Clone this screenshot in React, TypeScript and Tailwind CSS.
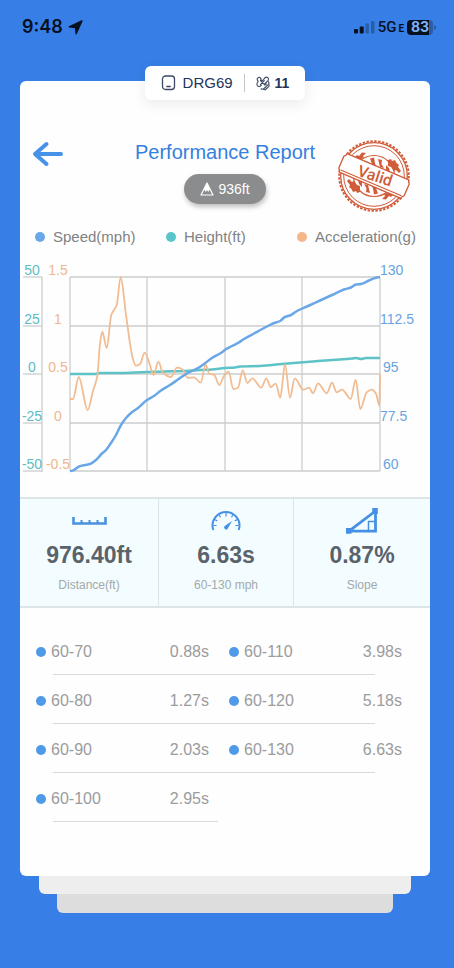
import type { ReactNode } from "react";

type Point = [number, number];

const GRID_X = [50, 127, 205, 282, 360];
const GRID_Y = [15, 64, 112, 161, 209];

const HEIGHT_LABELS = ["50", "25", "0", "-25", "-50"];
const ACCEL_LABELS = ["1.5", "1", "0.5", "0", "-0.5"];
const SPEED_LABELS = ["130", "112.5", "95", "77.5", "60"];

const speedLine: Point[] = [
  [50, 209], [54, 208], [59, 204.5], [65, 203], [70, 202], [76, 198], [81, 192.5], [86, 188],
  [91, 181], [96, 173], [101, 163], [106, 156], [111, 151], [118, 146], [127, 138], [134, 134],
  [141, 128.5], [150, 123], [158, 117.5], [166, 112], [172, 109], [178, 106], [184, 102],
  [192, 96], [200, 91.5], [207, 86.5], [212, 84], [218, 81], [224, 77], [234, 71.5], [247, 64.5],
  [253, 61.5], [260, 59], [265, 55], [271, 53], [277, 49], [288, 44], [300, 38.5], [312, 33],
  [324, 27.5], [331, 25.5], [336, 22.5], [341, 22], [349, 18.5], [355, 16], [360, 15],
];

const heightLine: Point[] = [
  [50, 112], [75, 112], [80, 111], [100, 111], [115, 110.5], [128, 110], [145, 109.5],
  [165, 109], [180, 108], [192, 107.5], [205, 106], [215, 105.5], [220, 104.5], [240, 104],
  [262, 102], [280, 100.5], [293, 99.5], [305, 98.5], [320, 97.5], [332, 96.5], [336, 96],
  [341, 97], [346, 96], [360, 96],
];

const accelLine: Point[] = [
  [50, 137], [53, 137], [58.7, 115], [67.7, 148], [73, 129], [77.3, 114], [80, 82], [82.3, 69.7],
  [86.7, 86], [91.3, 53], [96.7, 43], [100.7, 15], [106, 53], [112.7, 96], [116, 103.7],
  [120, 102], [124.7, 90.7], [129.3, 101], [133.7, 113], [138.3, 99.7], [143, 111], [151, 115],
  [157, 105.7], [162, 107], [168, 116], [174, 115.3], [180.7, 120.7], [185.7, 102.7],
  [189.3, 112], [194, 112.6], [199.3, 123], [204, 114], [208.7, 109.7], [213.3, 127],
  [218, 125.7], [222.7, 108.3], [227.3, 121], [232.3, 116.3], [241.3, 125.7], [246.3, 116.3],
  [250.7, 125], [255.7, 121.7], [260.3, 135.7], [265, 102.3], [270, 135.7], [274.7, 116.3],
  [283.3, 127.7], [289, 125.7], [293, 131.3], [298, 121.3], [306.7, 131.3], [312, 120.7],
  [316.7, 130.3], [322, 127.7], [330.7, 137], [335.7, 117.7], [340.3, 147], [346.7, 130.3],
  [352, 127.7], [356, 131.7], [359.5, 143.7], [360, 111],
];

// Cubic path whose tangent is flat at every local peak or dip.
function smoothPath(points: Point[]) {
  const slopes = points.map(([x, y], i) => {
    const prev = points[i - 1];
    const next = points[i + 1];
    if (!prev || !next || (y - prev[1]) * (next[1] - y) <= 0) return 0;
    const a = (y - prev[1]) / (x - prev[0]);
    const b = (next[1] - y) / (next[0] - x);
    return (2 * a * b) / (a + b);
  });
  return points.reduce((path, [x, y], i) => {
    if (i === 0) return `M${x} ${y}`;
    const [px, py] = points[i - 1];
    const h = (x - px) / 3;
    return `${path}C${px + h} ${py + h * slopes[i - 1]} ${x - h} ${y - h * slopes[i]} ${x} ${y}`;
  }, "");
}

function StatusBar() {
  return (
    <div className="flex h-[66px] items-start justify-between pt-[17px] pl-[22px] pr-[18px] text-[#06101f]">
      <div className="flex h-5 items-center gap-[5px]">
        <span className="font-[Inter,sans-serif] text-lg font-semibold leading-5">9:48</span>
        <svg width="15" height="15" viewBox="0 0 15 15" fill="currentColor" stroke="currentColor" strokeWidth="1.400" strokeLinejoin="round">
          <path d="M13.900 1 1.200 6.800l6.300.7.700 6.300z" />
        </svg>
      </div>
      <div className="flex h-5 items-center">
        <svg className="mr-[3px]" width="21" height="14" viewBox="0 0 21 14" fill="currentColor">
          <rect x="0" y="9" width="4" height="4.500" rx="1" />
          <rect x="5.700" y="6.500" width="4" height="7" rx="1" />
          <rect x="11.400" y="3.500" width="3.500" height="10" rx="1" opacity=".3" />
          <rect x="17" y="1" width="3.500" height="12.500" rx="1" opacity=".3" />
        </svg>
        <span className="font-[Roboto,sans-serif] text-[15px] font-medium leading-5">5G</span>
        <span className="ml-[2px] mt-1 font-[Roboto,sans-serif] text-[10px] font-bold leading-4">E</span>
        <span className="ml-[3px] flex h-[15px] w-[26px] items-center justify-center rounded-[4px] bg-linear-to-r from-[#06101f] from-85% to-[#2a5ba6] to-85% font-[Inter,sans-serif] text-sm font-bold leading-4 text-[#80b2f8]">
          83
        </span>
        <span className="ml-px h-[5px] w-[2px] rounded-r-sm bg-[#2a5ba6]" />
      </div>
    </div>
  );
}

function DeviceTab() {
  return (
    <div className="relative z-10 mx-auto flex h-[34px] items-center rounded-md bg-white px-4 text-[#24345c] shadow-[0_4px_14px_rgba(0,0,0,0.08)]">
      <svg className="mr-[7px]" width="15" height="16" viewBox="0 0 15 16" fill="none" stroke="#3d4965" strokeWidth="1.300">
        <rect x="1.500" y="1" width="12" height="13.500" rx="3" />
        <path d="M5.800 11.500h3.400" strokeLinecap="round" />
      </svg>
      <span className="text-[15px] leading-5">DRG69</span>
      <span className="mx-[11px] h-[18px] w-px bg-[#c3c5ca]" />
      <svg className="mr-[5px]" width="14" height="15" viewBox="0 0 14 15" fill="none" stroke="#3d4965" strokeWidth="1.100" strokeLinecap="round" strokeLinejoin="round">
        <path d="M4.500 4.500 8.600 8.600M8.300 4.700 4.300 8.700" />
        <path d="M5 3.900C5 1.900 3.700 1 2.500 1.400 1.100 1.900.7 3.500 1.700 4.500c.5.500.6 1.100.1 1.700-1.300 1.300-1.100 3.300.3 4 1.500.8 2.500-.2 3.400-1.100" />
        <path d="M5 4c1 .8 1.700.6 2.400-.2C8.300 2.600 8.800 1 10.500 1.100c1.600.1 2.600 1.900 1.700 3.200L8.600 8" />
        <path d="M12.400 5.600c.9 1 .6 2.200-.2 3L8 12.500c-.8.8-2 .9-2.900.3" />
        <path d="M13 8.800c.3.800 0 1.400-.6 2l-2.300 2.200c-.6.600-1.300.8-2.100.7M9 9.200l1.500-1.400" />
      </svg>
      <span className="text-sm font-bold leading-5">11</span>
    </div>
  );
}

function ValidStamp() {
  return (
    <svg className="mr-1.5" width="76" height="76" viewBox="0 0 76 76" role="img" aria-label="Valid">
      <g fill="none" stroke="#d05c39">
        <circle cx="38" cy="38" r="34.800" strokeWidth="2" strokeDasharray="2.400 1.504" />
        <circle cx="38" cy="38" r="33.300" strokeWidth="1.300" />
        <circle cx="38" cy="38" r="30.300" strokeWidth="1" />
        <circle cx="38" cy="38" r="20.500" strokeWidth="1.200" />
      </g>
      <g fill="#d05c39">
        <path d="M17 21l4-4 2 1 3-3.500 4 .5-3 3 1 2-3 1-1 3zM52 22l3-1 1 2 3-1 1.500 3 2.500 2-1 2 3 4-2 2-3-3-2 1-3-4-3-1z" />
        <path d="M59 55l-4 4-2-1-3 3.500-4-.5 3-3-1-2 3-1 1-3zM24 54l-3 1-1-2-3 1-1.500-3-2.500-2 1-2-3-4 2-2 3 3 2-1 3 4 3 1z" />
        <path d="M25 26l3-3 4 1 .5 3-2 2zM34 20.500l4-1 1 6 1.500 3-4-1zM42 21l4 1-.5 4 2.500 4-4-1zM50 27l3 3 1 4-4-2z" />
        <path d="M51 50l-3 3-4-1-.5-3 2-2zM42 55.500l-4 1-1-6-1.500-3 4 1zM34 55l-4-1 .5-4-2.500-4 4 1zM26 49l-3-3-1-4 4 2z" />
      </g>
      <g transform="rotate(23 38 38)">
        <path
          d="M4.500 28h67q.2 2.500 2 3.500v13q-2 .8-2 3.500h-67q-.2-2.500-2-3.500v-13q2-.8 2-3.500z"
          fill="#fff"
          stroke="#d05c39"
          strokeWidth="1.300"
          strokeLinejoin="round"
        />
        <path d="M5 45.500h66" stroke="#d05c39" strokeWidth="1.100" />
      </g>
      <text
        x="39"
        y="43"
        transform="rotate(18 38 38)"
        textAnchor="middle"
        className="fill-[#d05c39] font-[Roboto,sans-serif] text-base font-medium"
      >
        Valid
      </text>
    </svg>
  );
}

function Header() {
  return (
    <header className="grid grid-cols-[1fr_auto_1fr] items-start px-3">
      <button type="button" aria-label="Back" className="flex h-8 w-8 items-center justify-center">
        <svg width="32" height="26" viewBox="0 0 32 26" fill="none" stroke="#4792e8" strokeWidth="4" strokeLinecap="round" strokeLinejoin="round">
          <path d="M14.500 3 3 13l11.500 10M3.500 13H29" />
        </svg>
      </button>
      <div className="flex flex-col items-center gap-2">
        <h1 className="text-xl leading-7 text-[#3480df]">Performance Report</h1>
        <div className="flex h-[30px] items-center gap-1 rounded-full bg-[#8b8c8d] px-4 text-sm text-white shadow-[1px_3px_5px_rgba(0,0,0,0.25)]">
          <svg width="14" height="14" viewBox="0 0 14 14">
            <path d="M7 1 13 13H1z" fill="none" stroke="#fff" strokeWidth="1.200" strokeLinejoin="round" />
            <path d="M7 1 10.700 8.700 9.300 7.800 8.500 10 7 8.200 5.700 10 4.700 8 3.300 8.700z" fill="#fff" />
          </svg>
          936ft
        </div>
      </div>
      <div className="justify-self-end">
        <ValidStamp />
      </div>
    </header>
  );
}

function Legend() {
  return (
    <ul className="mt-[13px] grid grid-cols-3 pl-[15px] pr-[2px] text-[15px] leading-5 text-[#808284]">
      <li className="flex items-center gap-2">
        <span className="size-2.5 rounded-full bg-[#6ba8ea]" />
        Speed(mph)
      </li>
      <li className="flex items-center gap-2">
        <span className="size-2.5 rounded-full bg-[#5bc5cb]" />
        Height(ft)
      </li>
      <li className="flex items-center gap-2">
        <span className="size-2.5 rounded-full bg-[#f5b68a]" />
        Acceleration(g)
      </li>
    </ul>
  );
}

function Chart() {
  return (
    <svg className="mt-[15px] block w-full" viewBox="0 0 410 220" role="img" aria-label="Speed, height and acceleration">
      <g stroke="#cbcccd" strokeWidth="1.300">
        {GRID_X.map((x) => (
          <line key={x} x1={x} x2={x} y1="15" y2="209" />
        ))}
        {GRID_Y.map((y) => (
          <line key={y} x1="50" x2="360" y1={y} y2={y} />
        ))}
        <line x1="22" x2="22" y1="15" y2="210" />
        {GRID_Y.map((y) => (
          <line key={y} x1="3" x2="22" y1={y} y2={y} />
        ))}
      </g>
      <g fill="none" strokeLinejoin="round">
        <path d={smoothPath(heightLine)} stroke="#5dc3c7" strokeWidth="2.500" />
        <path d={smoothPath(accelLine)} stroke="#f2bc92" strokeWidth="1.800" />
        <path d={smoothPath(speedLine)} stroke="#6aa7e6" strokeWidth="2.500" />
      </g>
      <g className="text-sm">
        {GRID_Y.map((y, i) => (
          <g key={y}>
            <text x="12" y={y - 2} textAnchor="middle" fill="#5dbcc4">
              {HEIGHT_LABELS[i]}
            </text>
            <text x="38" y={y - 2} textAnchor="middle" fill="#f0b78c">
              {ACCEL_LABELS[i]}
            </text>
            <text x={SPEED_LABELS[i].length === 2 ? 363 : 360} y={y - 2} fill="#69a4e0">
              {SPEED_LABELS[i]}
            </text>
          </g>
        ))}
      </g>
    </svg>
  );
}

function RulerIcon() {
  return (
    <svg width="35" height="8" viewBox="0 0 35 8" fill="none" stroke="#4a90e0">
      <path d="M1.500 0v6.500h32V0" strokeWidth="2.600" />
      <path d="M9.500 3v4M17.500 3v4M25.500 3v4" strokeWidth="2" />
    </svg>
  );
}

function GaugeIcon() {
  return (
    <svg width="30" height="20" viewBox="0 0 30 20" fill="none" stroke="#4590e4">
      <path d="M2.300 19A13.500 13.500 0 0 1 1.500 14.500a13.500 13.500 0 0 1 27 0 13.500 13.500 0 0 1-.8 4.500" strokeWidth="2" />
      <path d="M15 1.500v4M8 3.500l1.500 2.800M22 3.500l-1.500 2.800M3.500 8.500l2.800 1.400M26.500 8.500l-2.800 1.400M2.500 14.500h3M27.500 14.500h-3" strokeWidth="1.200" />
      <path d="M21 10 16.800 17.600a2 2 0 1 1-3.100-2.500z" fill="#4590e4" stroke="none" />
    </svg>
  );
}

function SlopeIcon() {
  return (
    <svg width="32" height="26" viewBox="0 0 32 26" fill="none" stroke="#4590e4">
      <path d="M3 23.200 29.500 3v20.200z" strokeWidth="2.800" />
      <path d="M22.500 22v-8.500h6" strokeWidth="1.500" />
      <path d="M0 20h5.500v5.800H0zM26.300 0h5.500v6h-5.500z" fill="#4590e4" stroke="none" />
    </svg>
  );
}

function Stat({ icon, value, label }: { icon: ReactNode; value: string; label: string }) {
  return (
    <div className="flex flex-col items-center pb-[13px]">
      <div className="flex h-11 items-center">{icon}</div>
      <span className="text-[23px] font-bold leading-6 text-[#5a626a]">{value}</span>
      <span className="mt-2.5 text-xs leading-4 text-[#a3a8ab]">{label}</span>
    </div>
  );
}

function Stats() {
  return (
    <section className="mt-[15px] grid grid-cols-[139fr_135fr_136fr] divide-x divide-[#dde5e7] border-y-2 border-[#dde5e7] bg-[#f3fcff]">
      <Stat icon={<RulerIcon />} value="976.40ft" label="Distance(ft)" />
      <Stat icon={<GaugeIcon />} value="6.63s" label="60-130 mph" />
      <Stat icon={<SlopeIcon />} value="0.87%" label="Slope" />
    </section>
  );
}

const splitRows = [
  [{ range: "60-70", time: "0.88s" }, { range: "60-110", time: "3.98s" }],
  [{ range: "60-80", time: "1.27s" }, { range: "60-120", time: "5.18s" }],
  [{ range: "60-90", time: "2.03s" }, { range: "60-130", time: "6.63s" }],
  [{ range: "60-100", time: "2.95s" }],
];

function Splits() {
  return (
    <section className="mt-[18px] text-base leading-6 text-[#9b9c9d]">
      {splitRows.map((row) => (
        <div key={row[0].range}>
          <div className="grid grid-cols-2 gap-5 pt-3.5 pb-2.5 pl-4 pr-7">
            {row.map(({ range, time }) => (
              <div key={range} className="flex items-center">
                <span className="mr-[5px] size-2.5 rounded-full bg-[#4f9ae6]" />
                <span>{range}</span>
                <span className="ml-auto">{time}</span>
              </div>
            ))}
          </div>
          <div className={row.length > 1 ? "ml-[33px] mr-[55px] h-px bg-[#d9dadb]" : "ml-[33px] mr-[212px] h-px bg-[#d9dadb]"} />
        </div>
      ))}
    </section>
  );
}

export default function App() {
  return (
    <main className="min-h-screen bg-[#377fe6] pb-14 font-['Liberation_Sans',Arial,sans-serif]">
      <StatusBar />
      <div className="flex flex-col pl-5 pr-6">
        <DeviceTab />
        <div className="-mt-[19px] rounded-md bg-[#fefefe] pt-[57px] pb-[54px]">
          <Header />
          <Legend />
          <Chart />
          <Stats />
          <Splits />
        </div>
        <div className="mx-[19px] h-[18px] rounded-b-md bg-[#eeeeee]" />
        <div className="mx-[37px] h-[19px] rounded-b-md bg-[#dddddd]" />
      </div>
    </main>
  );
}
